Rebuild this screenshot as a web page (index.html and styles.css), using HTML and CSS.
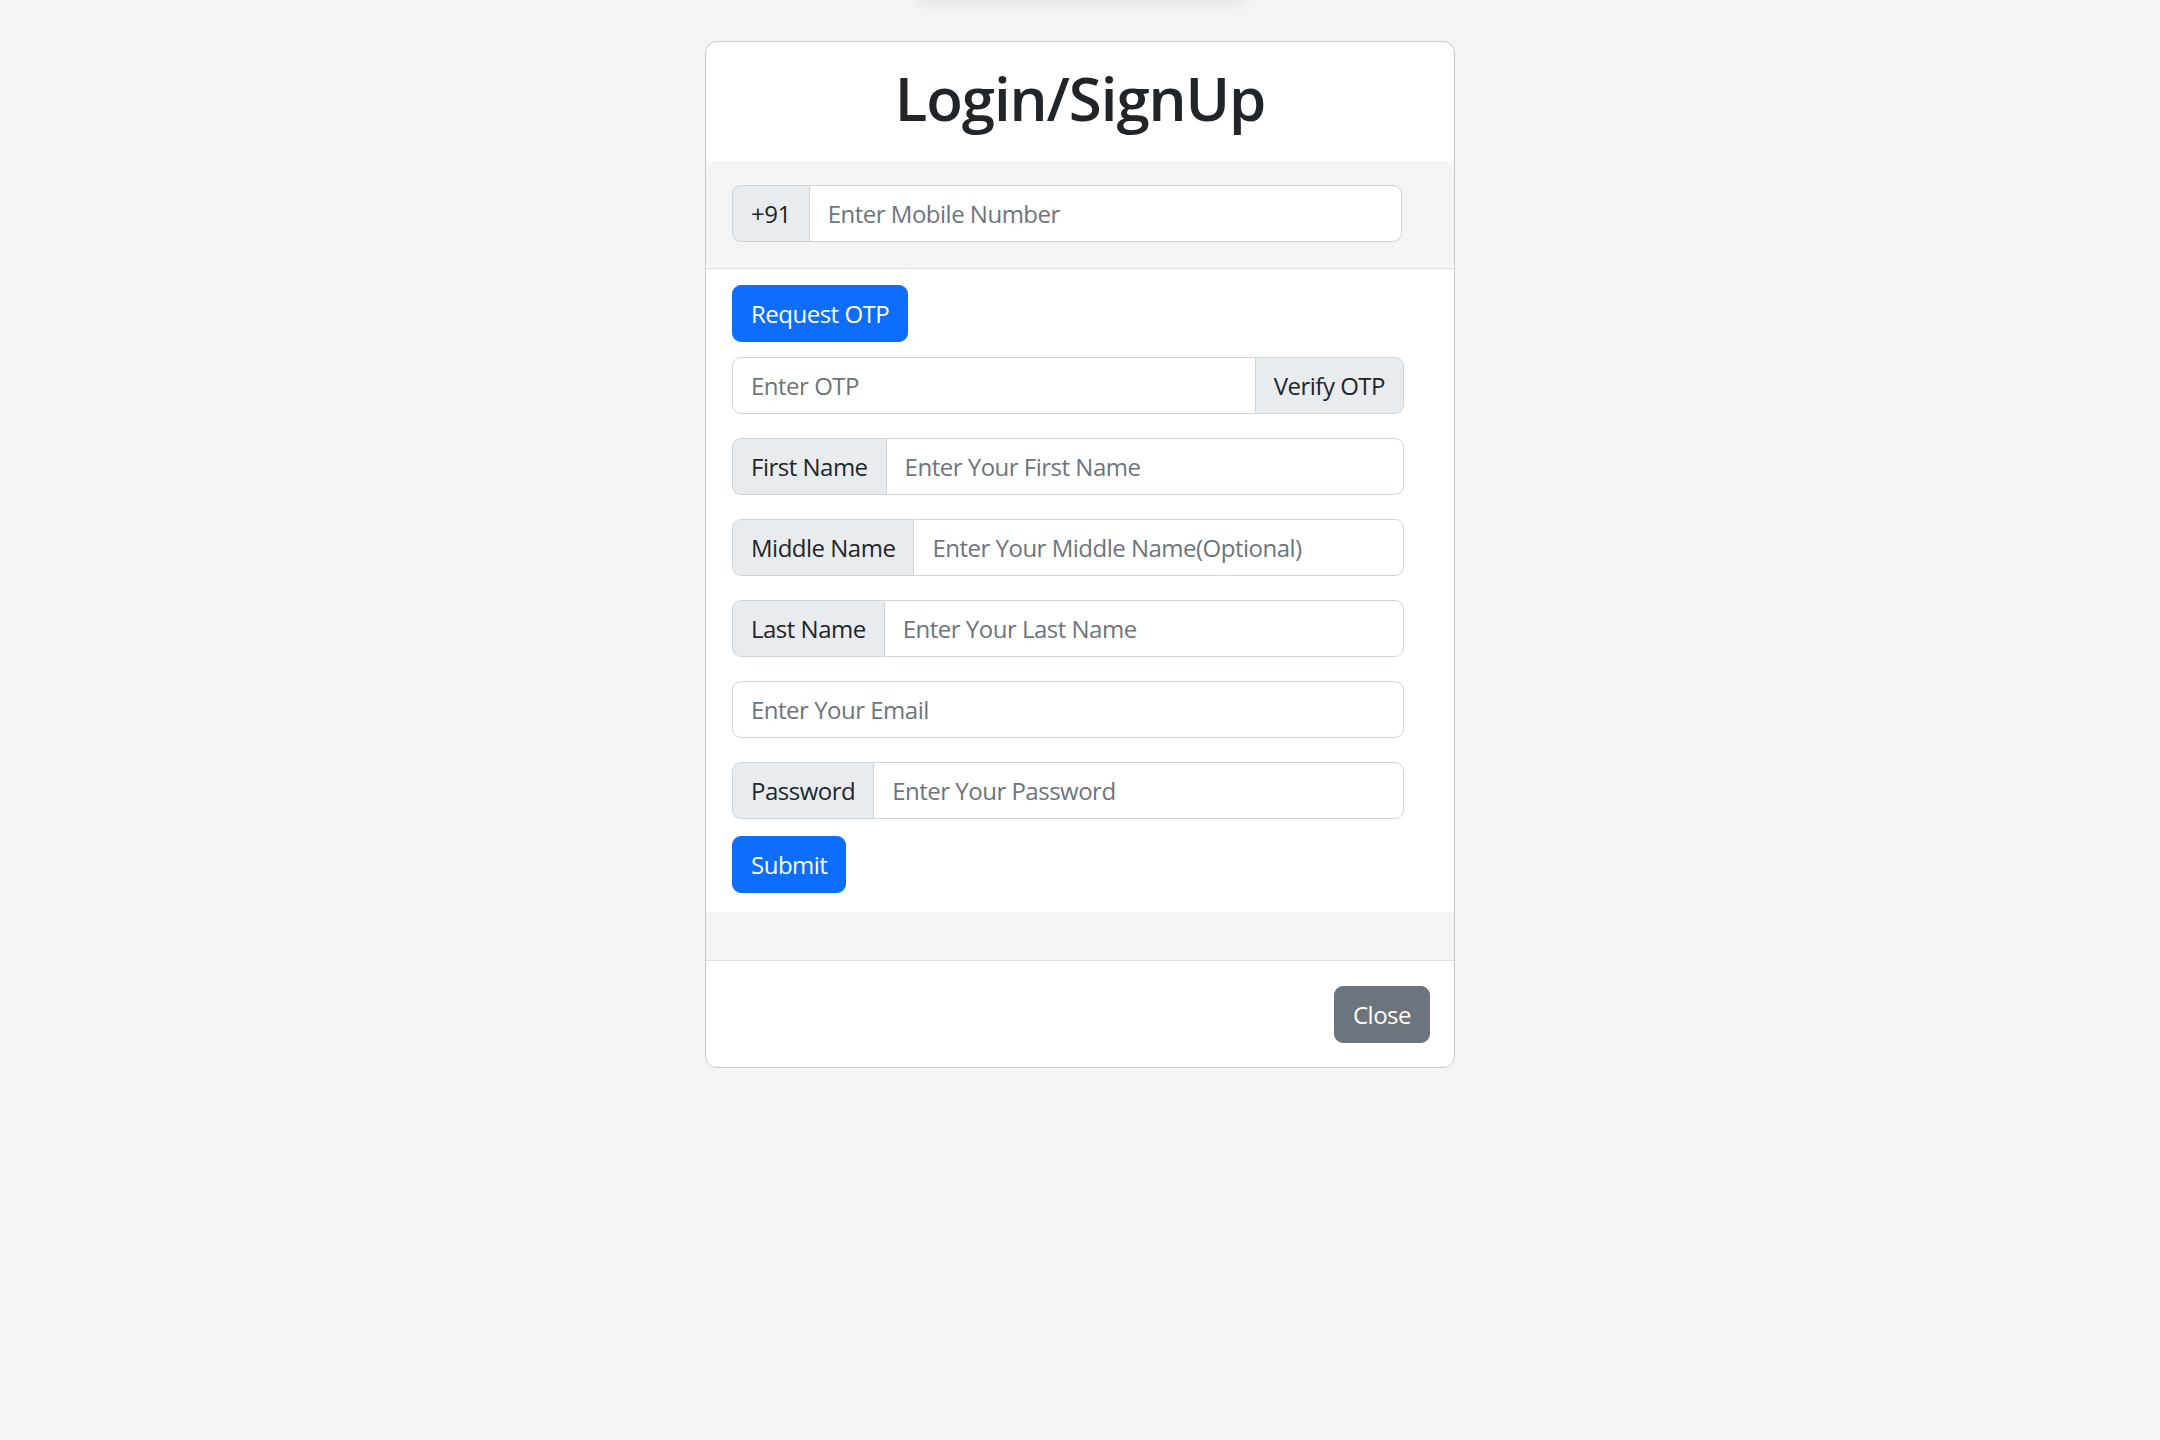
FILE: index.html
```html
<!DOCTYPE html>
<html lang="en">
<head>
<meta charset="utf-8">
<title>Login/SignUp</title>
<link rel="stylesheet" href="styles.css">
</head>
<body>
<div class="top-shadow"></div>
<div class="modal">
  <div class="modal-content">
    <div class="modal-header">
      <h1 class="modal-title">Login/SignUp</h1>
    </div>
    <div class="band band-top">
      <div class="input-group">
        <span class="addon">+91</span>
        <input class="form-control" type="text" placeholder="Enter Mobile Number">
      </div>
    </div>
    <div class="modal-body">
      <button class="btn btn-primary btn-request" type="button">Request OTP</button>
      <div class="input-group">
        <input class="form-control" type="text" placeholder="Enter OTP">
        <span class="addon">Verify OTP</span>
      </div>
      <div class="input-group">
        <span class="addon">First Name</span>
        <input class="form-control" type="text" placeholder="Enter Your First Name">
      </div>
      <div class="input-group">
        <span class="addon">Middle Name</span>
        <input class="form-control" type="text" placeholder="Enter Your Middle Name(Optional)">
      </div>
      <div class="input-group">
        <span class="addon">Last Name</span>
        <input class="form-control" type="text" placeholder="Enter Your Last Name">
      </div>
      <div class="input-group">
        <input class="form-control" type="email" placeholder="Enter Your Email">
      </div>
      <div class="input-group last">
        <span class="addon">Password</span>
        <input class="form-control" type="password" placeholder="Enter Your Password">
      </div>
      <button class="btn btn-primary" type="submit">Submit</button>
    </div>
    <div class="band band-bottom"></div>
    <div class="modal-footer">
      <button class="btn btn-secondary" type="button">Close</button>
    </div>
  </div>
</div>
</body>
</html>
```
FILE: styles.css
```css
* { box-sizing: border-box; }

html, body {
  margin: 0;
  padding: 0;
  height: 100%;
}

body {
  background: #f4f4f4;
  font-family: "Open Sans", "Noto Sans", sans-serif;
  font-size: 24px;
  line-height: 1.5;
  color: #212529;
  position: relative;
  overflow: hidden;
}

.top-shadow {
  position: absolute;
  top: -24px;
  left: 916px;
  width: 330px;
  height: 24px;
  border-radius: 12px;
  box-shadow: 0 4px 14px rgba(0, 0, 0, 0.07);
}

.modal {
  width: 750px;
  margin: 41px auto 0;
}

.modal-content {
  background: #fff;
  border: 1px solid #c9c9c9;
  border-radius: 12px;
  overflow: hidden;
}

.modal-header {
  height: 119px;
  padding: 20px 24px 0;
  text-align: center;
}

.modal-title {
  margin: 0;
  font-size: 60px;
  line-height: 72px;
  font-weight: 600;
  letter-spacing: -1.1px;
  color: #212529;
}

.band {
  background: #f4f4f4;
}

.band-top {
  border-radius: 11px 11px 0 0;
  padding: 24px 52px 26px 26px;
  border-bottom: 1px solid #dee2e6;
}

.band-bottom {
  height: 48px;
}

.modal-body {
  padding: 16px 50px 19px 26px;
}

.input-group {
  display: flex;
  align-items: stretch;
  height: 57px;
  margin-bottom: 24px;
}

.input-group.last {
  margin-bottom: 17px;
}

.band-top .input-group {
  margin-bottom: 0;
}

.addon {
  display: flex;
  align-items: center;
  padding: 0 18px;
  background: #e9ecef;
  border: 1px solid #ced4da;
  color: #212529;
  white-space: nowrap;
  font-size: 24px;
  letter-spacing: -0.5px;
}

.form-control {
  flex: 1 1 auto;
  min-width: 0;
  height: 57px;
  padding: 0 18px;
  margin: 0;
  font-family: inherit;
  font-size: 24px;
  letter-spacing: -0.5px;
  color: #212529;
  background: #fff;
  border: 1px solid #ced4da;
  border-radius: 9px;
  outline: none;
}

.form-control::placeholder {
  color: #6c757d;
  opacity: 1;
}

.input-group > .addon:first-child {
  border-radius: 9px 0 0 9px;
  border-right: 0;
}

.input-group > .addon:first-child + .form-control {
  border-radius: 0 9px 9px 0;
}

.input-group > .form-control:first-child:not(:last-child) {
  border-radius: 9px 0 0 9px;
}

.input-group > .form-control + .addon {
  border-radius: 0 9px 9px 0;
  border-left: 0;
}

.btn {
  display: inline-block;
  height: 57px;
  padding: 0 18px;
  font-family: inherit;
  font-size: 24px;
  letter-spacing: -0.5px;
  line-height: 55px;
  border: 1px solid transparent;
  border-radius: 9px;
  color: #fff;
  cursor: pointer;
  vertical-align: top;
}

.btn-primary {
  background: #0d6efd;
  border-color: #0d6efd;
}

.btn-request {
  display: block;
  margin-bottom: 15px;
}

.btn-secondary {
  background: #6c757d;
  border-color: #6c757d;
}

.modal-footer {
  border-top: 1px solid #dee2e6;
  padding: 25px 24px 24px;
  display: flex;
  justify-content: flex-end;
}
```
